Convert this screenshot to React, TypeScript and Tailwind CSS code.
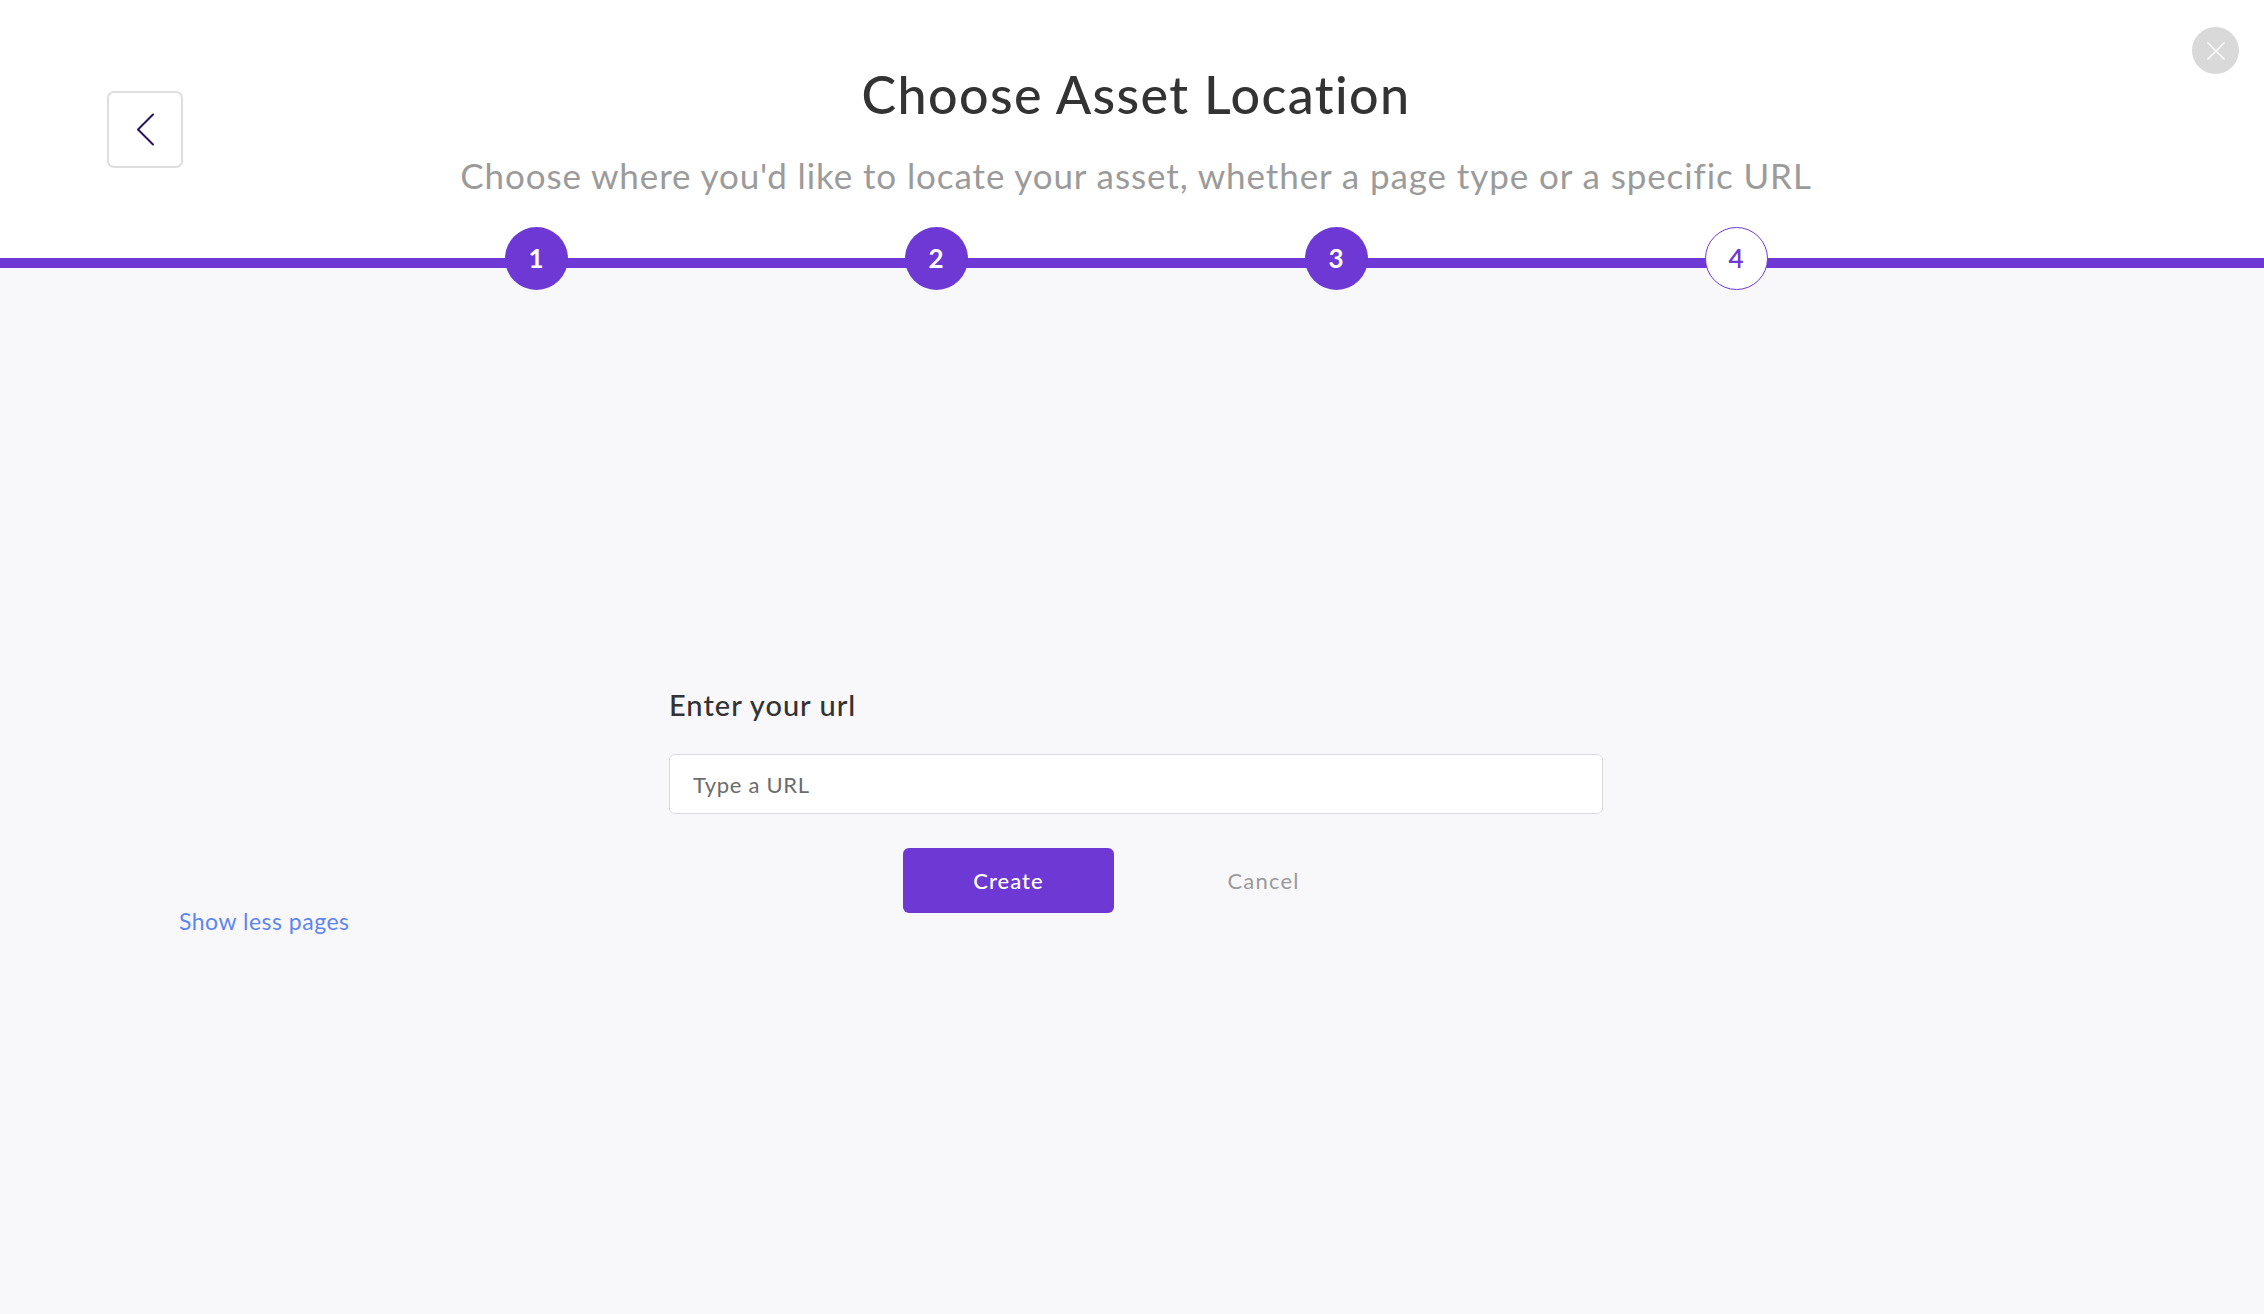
import { useState } from "react";

const steps = [1, 2, 3, 4];
const current = 4;

export default function App() {
  const [url, setUrl] = useState("");

  return (
    <div className="min-h-screen w-full flex flex-col bg-[#f8f8fa] font-['Lato',sans-serif]">
      {/* header */}
      <div className="relative h-[258px] bg-white pl-[8px]">
        <button className="absolute left-[107px] top-[91px] w-[76px] h-[77px] rounded-[7px] border-2 border-[#dedede] bg-white flex items-center justify-center">
          <svg width="19" height="33" viewBox="0 0 19 33" fill="none">
            <polyline
              points="17,1.5 2,16.5 17,31.5"
              stroke="#2a1262"
              strokeWidth="2"
              strokeLinecap="round"
              strokeLinejoin="round"
            />
          </svg>
        </button>

        <button className="absolute right-[25px] top-[27px] w-[47px] h-[47px] rounded-full bg-[#d9d9d9] flex items-center justify-center">
          <svg width="18" height="18" viewBox="0 0 18 18" fill="none">
            <path d="M1 1L17 17M17 1L1 17" stroke="white" strokeWidth="1.6" strokeLinecap="round" />
          </svg>
        </button>

        <div className="flex flex-col items-center pt-[63px]">
          <h1 className="text-[52px] leading-[62px] font-medium tracking-[1.4px] text-[#333333]">
            Choose Asset Location
          </h1>
          <p className="mt-[29px] text-[35px] leading-[42px] tracking-[0.9px] text-[#9b9b9b]">
            Choose where you'd like to locate your asset, whether a page type or a specific URL
          </p>
        </div>
      </div>

      {/* stepper */}
      <div className="relative h-[10px] bg-[#6e38d5]">
        <div className="absolute left-1/2 -translate-x-1/2 ml-[4px] -top-[31px] w-[1600px] grid grid-cols-4">
          {steps.map((s) => (
            <div key={s} className="flex justify-center">
              {s < current ? (
                <div className="w-[63px] h-[63px] rounded-full bg-[#6e38d5] flex items-center justify-center text-white text-[26px] font-bold">
                  {s}
                </div>
              ) : (
                <div className="w-[63px] h-[63px] rounded-full bg-white border border-[#6e38d5] flex items-center justify-center text-[#6e38d5] text-[26px] font-semibold">
                  {s}
                </div>
              )}
            </div>
          ))}
        </div>
      </div>

      {/* body */}
      <div className="flex-1 bg-[#f8f8fa] pl-[8px] pt-[419px] grid grid-cols-[1fr_934px_1fr]">
        <div className="pl-[171px] pt-[220px]">
          <button className="text-[23px] leading-[28px] tracking-[0.5px] text-[#5f86ee]">Show less pages</button>
        </div>

        <div>
          <h2 className="text-[29px] leading-[36px] font-medium tracking-[1px] text-[#333333]">Enter your url</h2>
          <input
            value={url}
            onChange={(e) => setUrl(e.target.value)}
            placeholder="Type a URL"
            className="mt-[31px] block w-full h-[60px] rounded-[6px] border border-[#dcdcdc] bg-white px-[23px] text-[22px] tracking-[0.7px] text-[#333] placeholder:text-[#6b6b6b] focus:outline-none"
          />
          <div className="mt-[34px] flex justify-center gap-[44px]">
            <button className="w-[211px] h-[65px] rounded-[6px] bg-[#6e38d5] text-white text-[22px] font-medium tracking-[1px]">
              Create
            </button>
            <button className="w-[211px] h-[65px] rounded-[6px] text-[#9a9a9a] text-[22px] tracking-[1.2px]">
              Cancel
            </button>
          </div>
        </div>

        <div />
      </div>
    </div>
  );
}
